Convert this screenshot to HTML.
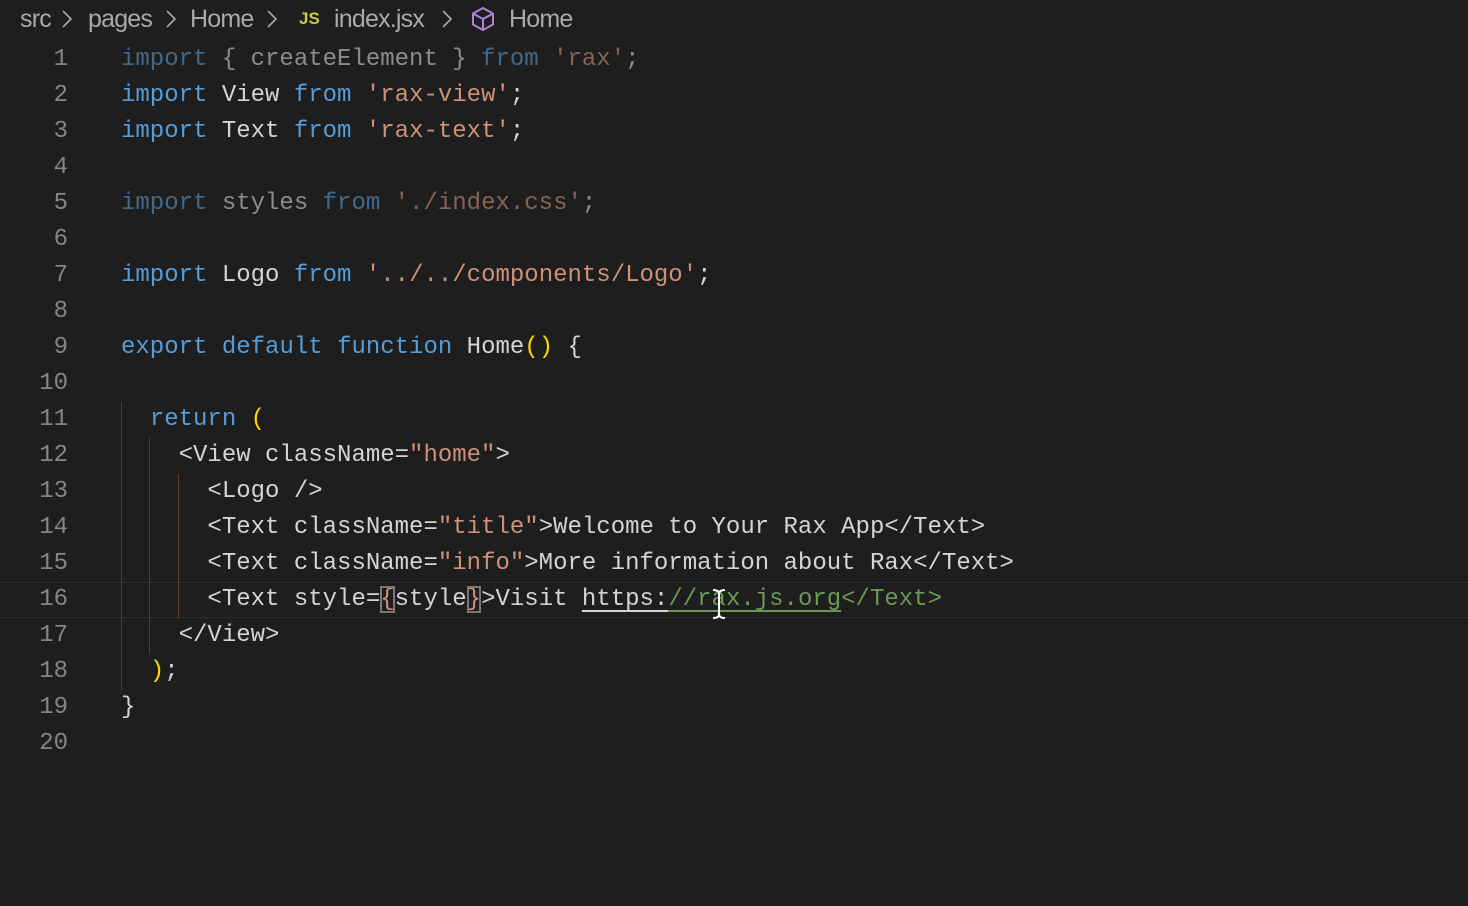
<!DOCTYPE html>
<html><head><meta charset="utf-8">
<style>
html,body{margin:0;padding:0;background:#1e1e1e;width:1468px;height:906px;overflow:hidden}
.bc{position:absolute;top:0;height:38px;line-height:38px;font-family:"Liberation Sans",sans-serif;font-size:25px;color:#a9a9a9;letter-spacing:-0.8px}
.ln{position:absolute;left:0;width:68px;text-align:right;font-family:"Liberation Mono",monospace;font-size:24px;color:#858585;height:36px;line-height:36px}
.cd{position:absolute;left:121px;font-family:"Liberation Mono",monospace;font-size:24px;color:#d4d4d4;height:36px;line-height:36px;white-space:pre}
.k{color:#569cd6}.s{color:#ce9178}.y{color:#ffd700}.g{color:#808080}.c{color:#6a9955}
.f{opacity:.6}
.guide{position:absolute;width:1px;background:#404040}
.ch{position:absolute;top:9px}
</style></head><body>
<div class="bc" style="left:20px">src</div>
<svg class="ch" style="left:61px" width="12" height="20" viewBox="0 0 12 20" fill="none" stroke="#a9a9a9" stroke-width="1.6"><path d="M2 2 L10 10 L2 18"/></svg>
<div class="bc" style="left:88px">pages</div>
<svg class="ch" style="left:165px" width="12" height="20" viewBox="0 0 12 20" fill="none" stroke="#a9a9a9" stroke-width="1.6"><path d="M2 2 L10 10 L2 18"/></svg>
<div class="bc" style="left:190px">Home</div>
<svg class="ch" style="left:266px" width="12" height="20" viewBox="0 0 12 20" fill="none" stroke="#a9a9a9" stroke-width="1.6"><path d="M2 2 L10 10 L2 18"/></svg>
<div class="bc" style="left:299px;color:#cbcb41;font-weight:bold;font-size:17px;letter-spacing:0">JS</div>
<div class="bc" style="left:334px">index.jsx</div>
<svg class="ch" style="left:441px" width="12" height="20" viewBox="0 0 12 20" fill="none" stroke="#a9a9a9" stroke-width="1.6"><path d="M2 2 L10 10 L2 18"/></svg>
<svg style="position:absolute;left:469px;top:5px" width="28" height="28" viewBox="0 0 28 28" fill="none" stroke="#b180d7" stroke-width="2" stroke-linejoin="round"><path d="M14 3 L24 8.5 V19.5 L14 25 L4 19.5 V8.5 Z M4 8.5 L14 14 L24 8.5 M14 14 V25"/></svg>
<div class="bc" style="left:509px">Home</div>

<div style="position:absolute;left:0;right:0;top:582px;height:34px;border-top:1px solid #2c2c2c;border-bottom:1px solid #2c2c2c"></div>
<div class="guide" style="left:121px;top:402px;height:288px"></div>
<div class="guide" style="left:149px;top:438px;height:216px"></div>
<div class="guide" style="left:178px;top:474px;height:144px;background:#6b3a2a"></div>

<div class="ln" style="top:42px">1</div><div class="cd" style="top:42px"><span class="f"><span class="k">import</span> { createElement } <span class="k">from</span> <span class="s">'rax'</span>;</span></div>
<div class="ln" style="top:78px">2</div><div class="cd" style="top:78px"><span class="k">import</span> View <span class="k">from</span> <span class="s">'rax-view'</span>;</div>
<div class="ln" style="top:114px">3</div><div class="cd" style="top:114px"><span class="k">import</span> Text <span class="k">from</span> <span class="s">'rax-text'</span>;</div>
<div class="ln" style="top:150px">4</div>
<div class="ln" style="top:186px">5</div><div class="cd" style="top:186px"><span class="f"><span class="k">import</span> styles <span class="k">from</span> <span class="s">'./index.css'</span>;</span></div>
<div class="ln" style="top:222px">6</div>
<div class="ln" style="top:258px">7</div><div class="cd" style="top:258px"><span class="k">import</span> Logo <span class="k">from</span> <span class="s">'../../components/Logo'</span>;</div>
<div class="ln" style="top:294px">8</div>
<div class="ln" style="top:330px">9</div><div class="cd" style="top:330px"><span class="k">export</span> <span class="k">default</span> <span class="k">function</span> Home<span class="y">()</span> {</div>
<div class="ln" style="top:366px">10</div>
<div class="ln" style="top:402px">11</div><div class="cd" style="top:402px">  <span class="k">return</span> <span class="y">(</span></div>
<div class="ln" style="top:438px">12</div><div class="cd" style="top:438px">    &lt;View className=<span class="s">"home"</span>&gt;</div>
<div class="ln" style="top:474px">13</div><div class="cd" style="top:474px">      &lt;Logo /&gt;</div>
<div class="ln" style="top:510px">14</div><div class="cd" style="top:510px">      &lt;Text className=<span class="s">"title"</span>&gt;Welcome to Your Rax App&lt;/Text&gt;</div>
<div class="ln" style="top:546px">15</div><div class="cd" style="top:546px">      &lt;Text className=<span class="s">"info"</span>&gt;More information about Rax&lt;/Text&gt;</div>
<div class="ln" style="top:582px">16</div><div class="cd" style="top:582px">      &lt;Text style=<span class="s" style="outline:2px solid #777;outline-offset:-2px">{</span>style<span class="s" style="outline:2px solid #777;outline-offset:-2px">}</span>&gt;Visit <span style="text-decoration:underline;text-underline-offset:5px">https:</span><span class="c" style="text-decoration:underline;text-underline-offset:5px">//rax.js.org</span><span class="c">&lt;/Text&gt;</span></div>
<div class="ln" style="top:618px">17</div><div class="cd" style="top:618px">    &lt;/View&gt;</div>
<div class="ln" style="top:654px">18</div><div class="cd" style="top:654px">  <span class="y">)</span>;</div>
<div class="ln" style="top:690px">19</div><div class="cd" style="top:690px">}</div>
<div class="ln" style="top:726px">20</div>
<svg style="position:absolute;left:710px;top:588px" width="18" height="32" viewBox="0 0 18 32" fill="none" stroke="#fff" stroke-width="2"><path d="M3 2 Q9 2 9 6 V26 Q9 30 3 30 M15 2 Q9 2 9 6 M9 26 Q9 30 15 30"/></svg>
</body></html>
